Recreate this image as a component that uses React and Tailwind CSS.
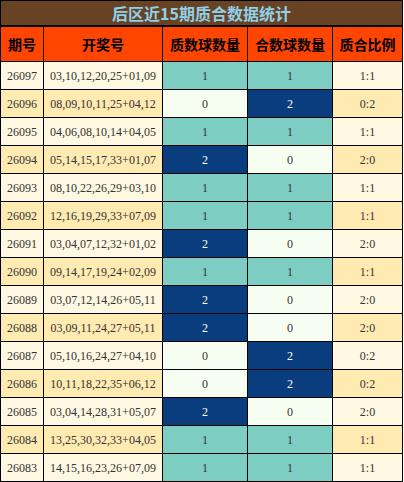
const rows = [
  ["26097", "03,10,12,20,25+01,09", 1, 1],
  ["26096", "08,09,10,11,25+04,12", 0, 2],
  ["26095", "04,06,08,10,14+04,05", 1, 1],
  ["26094", "05,14,15,17,33+01,07", 2, 0],
  ["26093", "08,10,22,26,29+03,10", 1, 1],
  ["26092", "12,16,19,29,33+07,09", 1, 1],
  ["26091", "03,04,07,12,32+01,02", 2, 0],
  ["26090", "09,14,17,19,24+02,09", 1, 1],
  ["26089", "03,07,12,14,26+05,11", 2, 0],
  ["26088", "03,09,11,24,27+05,11", 2, 0],
  ["26087", "05,10,16,24,27+04,10", 0, 2],
  ["26086", "10,11,18,22,35+06,12", 0, 2],
  ["26085", "03,04,14,28,31+05,07", 2, 0],
  ["26084", "13,25,30,32,33+04,05", 1, 1],
  ["26083", "14,15,16,23,26+07,09", 1, 1],
]

const countCls = {
  0: "bg-[#f6fdf1] text-[#333]",
  1: "bg-[#7ecdc3] text-[#333]",
  2: "bg-[#0a3d7e] text-white",
}

const headers = ["期号", "开奖号", "质数球数量", "合数球数量", "质合比例"]

function App() {
  return (
    <div className="w-[403px] bg-black p-px flex flex-col">
      <div
        className="h-[24px] mb-[2px] bg-[#684323] text-[#8fd0ea] text-[16px] font-bold flex items-center justify-center"
        style={{ fontFamily: '"Noto Sans CJK SC", sans-serif' }}
      >
        后区近15期质合数据统计
      </div>

      <div className="grid grid-cols-[42px_118px_84px_84px_69px] gap-px">
        {headers.map((h) => (
          <div
            key={h}
            className="h-[34px] bg-[#ff4500] text-black text-[14px] font-bold flex items-center justify-center"
            style={{ fontFamily: '"Noto Sans CJK SC", sans-serif' }}
          >
            {h}
          </div>
        ))}

        {rows.map(([issue, nums, prime, comp], i) => {
          const stripe = i % 2 === 0 ? "bg-[#fff8e2]" : "bg-[#ffeab2]"
          const cell = "h-[27px] flex items-center justify-center text-[12px] font-['Liberation_Serif',serif]"
          return [
            <div key={issue + "a"} className={`${cell} ${stripe} text-[#333]`}>{issue}</div>,
            <div key={issue + "b"} className={`${cell} ${stripe} text-[#333]`}>{nums}</div>,
            <div key={issue + "c"} className={`${cell} ${countCls[prime]}`}>{prime}</div>,
            <div key={issue + "d"} className={`${cell} ${countCls[comp]}`}>{comp}</div>,
            <div key={issue + "e"} className={`${cell} ${stripe} text-[#333]`}>{prime}:{comp}</div>,
          ]
        })}
      </div>
    </div>
  )
}

export default App
